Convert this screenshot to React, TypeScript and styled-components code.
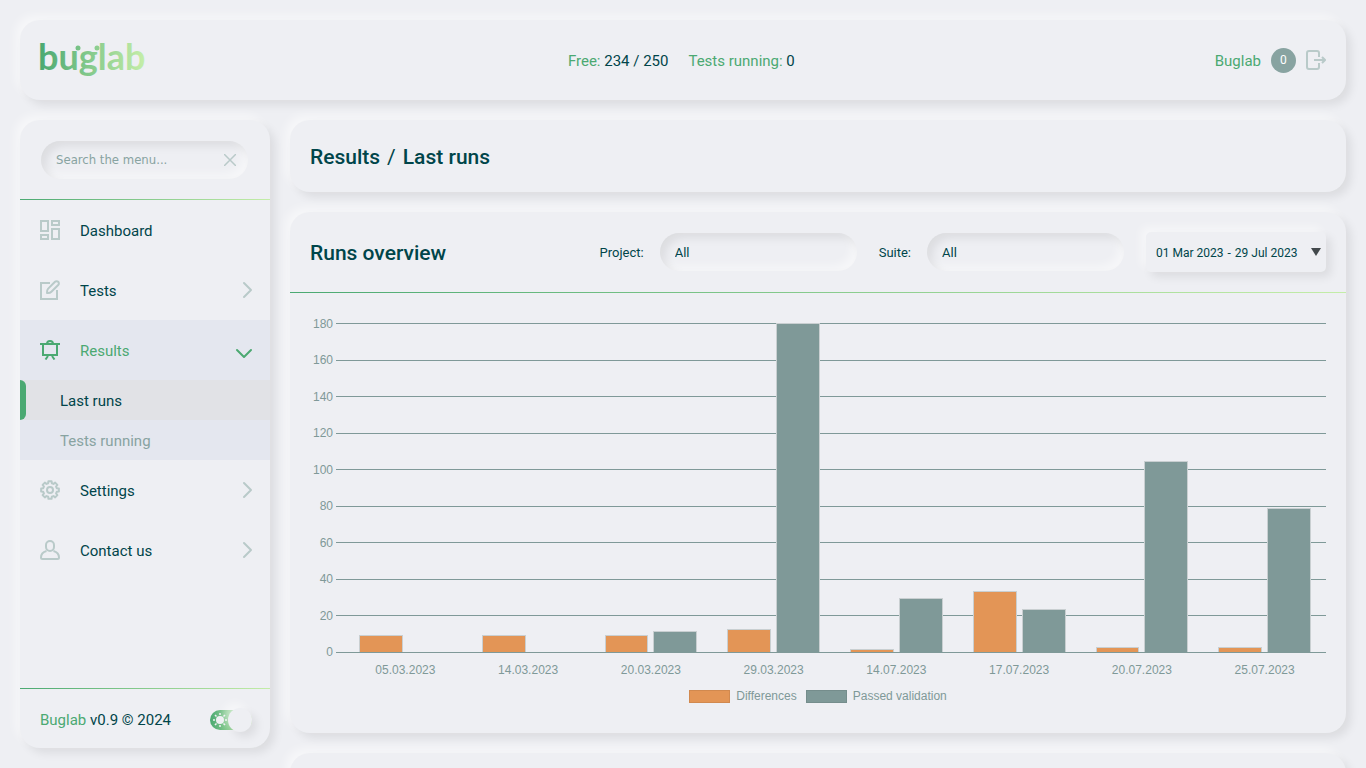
import React from "react";
import styled, { createGlobalStyle, css } from "styled-components";

const color = {
  surface: "#eeeff3",
  green: "#4ba972",
  lime: "#c4eda8",
  dark: "#00454a",
  muted: "#88a3a1",
  icon: "#b9cac9",
  chart: "#7f9998",
  orange: "#e39556",
};

const sans = `Roboto, "Liberation Sans", sans-serif`;
const gradientLine = `linear-gradient(90deg, ${color.green}, ${color.lime})`;

const raised = css`
  box-shadow: 5px 5px 10px rgba(0, 0, 0, 0.08), -5px -5px 10px rgba(255, 255, 255, 0.5);
`;
const sunken = css`
  box-shadow: inset 5px 5px 10px rgba(0, 0, 0, 0.08), inset -5px -5px 10px rgba(255, 255, 255, 0.5);
`;

const GlobalStyle = createGlobalStyle`
  *, *::before, *::after { box-sizing: border-box; }
  body {
    margin: 0;
    background: ${color.surface};
    color: ${color.dark};
    font: 15px/20px ${sans};
  }
  button, input, select { font-family: inherit; color: inherit; }
  a { color: inherit; text-decoration: none; }
`;

const Shell = styled.div`
  display: flex;
  flex-direction: column;
  gap: 20px;
  height: 100vh;
  padding: 20px;
  overflow: hidden;
`;

const Panel = styled.section`
  flex: none;
  background: ${color.surface};
  border-radius: 20px;
  ${raised}
`;

const TopBar = styled(Panel).attrs({ as: "header" })`
  display: flex;
  align-items: center;
  justify-content: space-between;
  height: 80px;
  padding: 0 20px;
`;

const Stats = styled.div`
  display: flex;
  gap: 20px;
  padding-top: 2px;
`;

const Accent = styled.span`
  color: ${color.green};
`;

const Account = styled.div`
  display: flex;
  align-items: center;
  gap: 10px;
  color: ${color.green};
`;

const AccountLink = styled.a`
  padding-top: 2px;
`;

const Badge = styled.span`
  display: grid;
  place-items: center;
  width: 25px;
  height: 25px;
  border-radius: 50%;
  background: ${color.muted};
  color: #fff;
  font-size: 12px;
`;

const IconButton = styled.button`
  display: grid;
  place-items: center;
  padding: 0;
  border: 0;
  background: none;
  color: ${color.icon};
  cursor: pointer;
`;

const Body = styled.div`
  display: flex;
  flex: 1;
  gap: 20px;
  min-height: 0;
`;

const Sidebar = styled(Panel).attrs({ as: "aside" })`
  display: flex;
  flex-direction: column;
  width: 250px;
`;

const Rule = styled.div`
  height: 1px;
  background: ${gradientLine};
`;

const SearchArea = styled.div`
  padding: 21px 22px 20px 21px;
`;

const SearchBox = styled.label`
  display: flex;
  align-items: center;
  height: 38px;
  padding: 0 12px 0 15px;
  border-radius: 20px;
  ${sunken}
`;

const SearchInput = styled.input`
  flex: 1;
  min-width: 0;
  padding: 0;
  border: 0;
  outline: 0;
  background: none;
  font: 13px/20px "DejaVu Sans Condensed", "Noto Sans", sans-serif;
  &::placeholder {
    color: ${color.muted};
    opacity: 1;
  }
`;

const Menu = styled.nav`
  flex: 1;
`;

const MenuGroup = styled.div<{ $open?: boolean }>`
  background: ${(p) => (p.$open ? "#e4e7ef" : "none")};
`;

const MenuItem = styled.a<{ $open?: boolean }>`
  display: flex;
  align-items: center;
  gap: 20px;
  height: 60px;
  padding: 0 15px 0 20px;
  color: ${(p) => (p.$open ? color.green : color.dark)};
  svg {
    flex: none;
    color: ${(p) => (p.$open ? color.green : color.icon)};
  }
`;

const MenuLabel = styled.span`
  flex: 1;
  padding-top: 2px;
`;

const SubItem = styled.a<{ $active?: boolean }>`
  display: flex;
  align-items: center;
  gap: 34px;
  height: 40px;
  background: ${(p) => (p.$active ? "#e1e2e6" : "none")};
  color: ${(p) => (p.$active ? color.dark : color.muted)};
  &::before {
    content: "";
    width: 6px;
    height: 100%;
    border-radius: 0 6px 6px 0;
    background: ${(p) => (p.$active ? color.green : "none")};
  }
`;

const SidebarFoot = styled.footer`
  display: flex;
  align-items: center;
  justify-content: space-between;
  height: 59px;
  padding: 2px 18px 0 20px;
`;

const Toggle = styled.label`
  display: flex;
  align-items: center;
  justify-content: space-between;
  width: 42px;
  height: 20px;
  padding-left: 2px;
  border-radius: 10px;
  background: linear-gradient(90deg, ${color.green}, ${color.lime} 90%);
  cursor: pointer;
  input {
    position: absolute;
    opacity: 0;
    pointer-events: none;
  }
`;

const Knob = styled.span`
  width: 24px;
  height: 24px;
  border-radius: 50%;
  background: ${color.surface};
  ${raised}
`;

const Main = styled.main`
  display: flex;
  flex: 1;
  flex-direction: column;
  gap: 20px;
  min-width: 0;
`;

const Breadcrumb = styled(Panel)`
  display: flex;
  align-items: center;
  height: 72px;
  padding: 0 20px;
`;

const Title = styled.h1`
  display: flex;
  gap: 7px;
  margin: 0;
  padding-top: 2px;
  font-size: 21px;
  line-height: 28px;
  font-weight: 500;
`;

const Slash = styled.span`
  font-weight: 400;
`;

const CardHead = styled.div`
  display: flex;
  align-items: center;
  justify-content: space-between;
  height: 80px;
  padding: 0 20px;
`;

const Filters = styled.div`
  display: flex;
  align-items: center;
  gap: 22px;
`;

const Field = styled.label`
  display: flex;
  align-items: center;
  gap: 16px;
  font-size: 13px;
`;

const FieldName = styled.span`
  padding-top: 2px;
`;

const Select = styled.select`
  width: 197px;
  height: 38px;
  padding: 0 15px;
  border: 0;
  border-radius: 20px;
  appearance: none;
  background: transparent;
  font-size: 13px;
  ${sunken}
`;

const DateRange = styled.button`
  display: flex;
  align-items: center;
  justify-content: space-between;
  width: 180px;
  height: 40px;
  padding: 0 5px 0 10px;
  border: 0;
  border-radius: 5px;
  background: ${color.surface};
  font-size: 12px;
  cursor: pointer;
  ${raised}
`;

const Dates = styled.span`
  display: flex;
  gap: 4px;
  padding-top: 2px;
`;

const ChartArea = styled.figure`
  display: grid;
  margin: 0;
  padding: 30px 20px 29px;
  color: ${color.chart};
  font: 12px/16px "Liberation Sans", Arial, sans-serif;
`;

const GridLines = styled.div`
  display: flex;
  flex-direction: column;
  justify-content: space-between;
  grid-area: 1 / 1;
  height: 330px;
`;

const GridLine = styled.div`
  display: flex;
  align-items: center;
  gap: 3px;
  height: 1px;
  &::after {
    content: "";
    flex: 1;
    height: 1px;
    background: ${color.chart};
  }
`;

const Tick = styled.span`
  width: 23px;
  text-align: right;
`;

const Bars = styled.div`
  display: flex;
  grid-area: 1 / 1;
  height: 329px;
  padding-left: 34px;
`;

const Group = styled.div`
  display: flex;
  flex: 1;
  align-items: flex-end;
  gap: 5px;
  padding: 0 15px;
`;

const Bar = styled.div<{ $tone: string }>`
  flex: 1;
  max-height: 100%;
  border: 1px solid #c9cfd1;
  border-bottom: 0;
  background: ${(p) => p.$tone};
`;

const XLabels = styled.div`
  display: flex;
  padding: 9px 0 0 34px;
  span {
    flex: 1;
    text-align: center;
  }
`;

const Legend = styled.figcaption`
  display: flex;
  justify-content: center;
  gap: 9px;
  padding-top: 10px;
`;

const LegendItem = styled.span`
  display: flex;
  align-items: center;
  gap: 6px;
`;

const Swatch = styled.i<{ $tone: string }>`
  width: 41px;
  height: 13px;
  border: 1px solid rgba(0, 0, 0, 0.08);
  background: ${(p) => p.$tone};
`;

const NextPanel = styled(Panel)`
  height: 200px;
`;

const Icon = ({ children, size = 20 }: { children: React.ReactNode; size?: number }) => (
  <svg
    width={size}
    height={size}
    viewBox={`0 0 ${size} ${size}`}
    fill="none"
    stroke="currentColor"
    strokeWidth="2"
    aria-hidden="true"
  >
    {children}
  </svg>
);

const gearPoints = Array.from({ length: 8 }, (_, tooth) =>
  [
    [-15, 7],
    [-10, 9],
    [10, 9],
    [15, 7],
  ].map(([offset, radius]) => {
    const angle = ((tooth * 45 + offset) * Math.PI) / 180;
    return `${(10 + radius * Math.cos(angle)).toFixed(2)},${(10 + radius * Math.sin(angle)).toFixed(2)}`;
  })
)
  .flat()
  .join(" ");

const icons = {
  dashboard: (
    <Icon>
      <rect x="1" y="1" width="7" height="10" />
      <rect x="12" y="1" width="7" height="4" />
      <rect x="1" y="15" width="7" height="4" />
      <rect x="12" y="9" width="7" height="10" />
    </Icon>
  ),
  edit: (
    <Icon>
      <path d="M10 3H1v16h16v-9" />
      <path d="M7 13c-.2-2 0-3.200 1.200-4.400l6.800-6.800a2 2 0 0 1 3.200 3.200l-6.800 6.800C10.200 13 9 13.200 7 13z" strokeLinejoin="round" />
    </Icon>
  ),
  board: (
    <Icon>
      <path d="M0 4h20M3 4v11h14V4M7 4c0-4 6-4 6 0M8 16l-2.500 3.500M12 16l2.500 3.500" />
    </Icon>
  ),
  gear: (
    <Icon>
      <polygon points={gearPoints} strokeLinejoin="round" />
      <circle cx="10" cy="10" r="3" />
    </Icon>
  ),
  user: (
    <Icon>
      <path d="M10 1a4 4 0 0 1 4 4v2c0 2.200-1.800 4-4 4s-4-1.800-4-4V5a4 4 0 0 1 4-4z" />
      <path d="M6.500 11C3 12 1 14.500 1 17.500 1 18.500 1.500 19 2.500 19h15c1 0 1.500-.500 1.500-1.500 0-3-2-5.500-5.500-6.500" />
    </Icon>
  ),
};

const ChevronRight = () => (
  <Icon>
    <path d="M9 3l7 7-7 7" strokeLinecap="round" strokeLinejoin="round" />
  </Icon>
);

const ChevronDown = () => (
  <Icon>
    <path d="M2 10l7 7 7-7" strokeLinecap="round" strokeLinejoin="round" />
  </Icon>
);

const Logo = () => (
  <svg width="108" height="44" viewBox="0 0 108 44" overflow="visible" role="img" aria-label="buglab">
    <defs>
      <linearGradient id="brand" gradientUnits="userSpaceOnUse" x1="0" y1="0" x2="104" y2="0">
        <stop offset="0" stopColor={color.green} />
        <stop offset="1" stopColor={color.lime} />
      </linearGradient>
    </defs>
    <g fill="url(#brand)">
      <text x="-2" y="32" fontFamily="Lato, sans-serif" fontSize="36" fontWeight="700">
        buglab
      </text>
      <circle cx="38" cy="10" r="2.500" />
      <circle cx="57" cy="10" r="2.500" />
    </g>
  </svg>
);

const menu = [
  { label: "Dashboard", icon: icons.dashboard, leaf: true },
  { label: "Tests", icon: icons.edit },
  { label: "Results", icon: icons.board, children: ["Last runs", "Tests running"] },
  { label: "Settings", icon: icons.gear },
  { label: "Contact us", icon: icons.user },
];

const ticks = [180, 160, 140, 120, 100, 80, 60, 40, 20, 0];

const runs = [
  { date: "05.03.2023", differences: 9, passed: 0 },
  { date: "14.03.2023", differences: 9, passed: 0 },
  { date: "20.03.2023", differences: 9, passed: 11 },
  { date: "29.03.2023", differences: 12, passed: 180 },
  { date: "14.07.2023", differences: 1, passed: 29 },
  { date: "17.07.2023", differences: 33, passed: 23 },
  { date: "20.07.2023", differences: 2, passed: 104 },
  { date: "25.07.2023", differences: 2, passed: 78 },
];

const barHeight = (value: number) => (value ? `calc(${(value / 180) * 100}% + 1px)` : 0);

export default function App() {
  return (
    <>
      <GlobalStyle />
      <Shell>
        <TopBar>
          <Logo />
          <Stats>
            <span>
              <Accent>Free:</Accent> 234 / 250
            </span>
            <span>
              <Accent>Tests running:</Accent> 0
            </span>
          </Stats>
          <Account>
            <AccountLink href="#account">Buglab</AccountLink>
            <Badge>0</Badge>
            <IconButton aria-label="Log out">
              <Icon>
                <path d="M13 7V3a2 2 0 0 0-2-2H3a2 2 0 0 0-2 2v14a2 2 0 0 0 2 2h8a2 2 0 0 0 2-2v-4M8 10h11M16 7l3 3-3 3" />
              </Icon>
            </IconButton>
          </Account>
        </TopBar>
        <Body>
          <Sidebar>
            <SearchArea>
              <SearchBox>
                <SearchInput aria-label="Search the menu" placeholder="Search the menu..." />
                <IconButton aria-label="Clear search">
                  <svg width="12" height="12" viewBox="0 0 12 12" stroke="currentColor" strokeWidth="1.500">
                    <path d="M0 0l12 12M12 0L0 12" />
                  </svg>
                </IconButton>
              </SearchBox>
            </SearchArea>
            <Rule />
            <Menu>
              {menu.map(({ label, icon, leaf, children }) => (
                <MenuGroup key={label} $open={!!children}>
                  <MenuItem href="#menu" $open={!!children}>
                    {icon}
                    <MenuLabel>{label}</MenuLabel>
                    {!leaf && (children ? <ChevronDown /> : <ChevronRight />)}
                  </MenuItem>
                  {children?.map((child, i) => (
                    <SubItem key={child} href="#results" $active={i === 0}>
                      <MenuLabel>{child}</MenuLabel>
                    </SubItem>
                  ))}
                </MenuGroup>
              ))}
            </Menu>
            <Rule />
            <SidebarFoot>
              <span>
                <Accent>Buglab</Accent> v0.9 © 2024
              </span>
              <Toggle>
                <input type="checkbox" aria-label="Light theme" defaultChecked />
                <svg width="16" height="16" viewBox="0 0 16 16" stroke={color.surface} strokeWidth="1.500" aria-hidden="true">
                  <circle cx="8" cy="8" r="4" fill={color.surface} stroke="none" />
                  <path d="M8 1v2M8 13v2M1 8h2M13 8h2M3 3l1.500 1.500M11.500 11.500L13 13M13 3l-1.500 1.500M4.500 11.500L3 13" />
                </svg>
                <Knob />
              </Toggle>
            </SidebarFoot>
          </Sidebar>
          <Main>
            <Breadcrumb>
              <Title>
                <span>Results</span>
                <Slash>/</Slash>
                <span>Last runs</span>
              </Title>
            </Breadcrumb>
            <Panel>
              <CardHead>
                <Title as="h2">Runs overview</Title>
                <Filters>
                  <Field>
                    <FieldName>Project:</FieldName>
                    <Select>
                      <option>All</option>
                    </Select>
                  </Field>
                  <Field>
                    <FieldName>Suite:</FieldName>
                    <Select>
                      <option>All</option>
                    </Select>
                  </Field>
                  <DateRange>
                    <Dates>
                      <span>01 Mar 2023</span>
                      <span>-</span>
                      <span>29 Jul 2023</span>
                    </Dates>
                    <svg width="10" height="9" viewBox="0 0 10 9" aria-hidden="true">
                      <path d="M0 0h10L5 8z" fill="#43494c" />
                    </svg>
                  </DateRange>
                </Filters>
              </CardHead>
              <Rule />
              <ChartArea>
                <GridLines>
                  {ticks.map((tick) => (
                    <GridLine key={tick}>
                      <Tick>{tick}</Tick>
                    </GridLine>
                  ))}
                </GridLines>
                <Bars>
                  {runs.map((run) => (
                    <Group key={run.date}>
                      <Bar $tone={color.orange} style={{ height: barHeight(run.differences) }} />
                      <Bar
                        $tone={color.chart}
                        style={{ height: barHeight(run.passed), visibility: run.passed ? "visible" : "hidden" }}
                      />
                    </Group>
                  ))}
                </Bars>
                <XLabels>
                  {runs.map((run) => (
                    <span key={run.date}>{run.date}</span>
                  ))}
                </XLabels>
                <Legend>
                  <LegendItem>
                    <Swatch $tone={color.orange} />
                    Differences
                  </LegendItem>
                  <LegendItem>
                    <Swatch $tone={color.chart} />
                    Passed validation
                  </LegendItem>
                </Legend>
              </ChartArea>
            </Panel>
            <NextPanel />
          </Main>
        </Body>
      </Shell>
    </>
  );
}
